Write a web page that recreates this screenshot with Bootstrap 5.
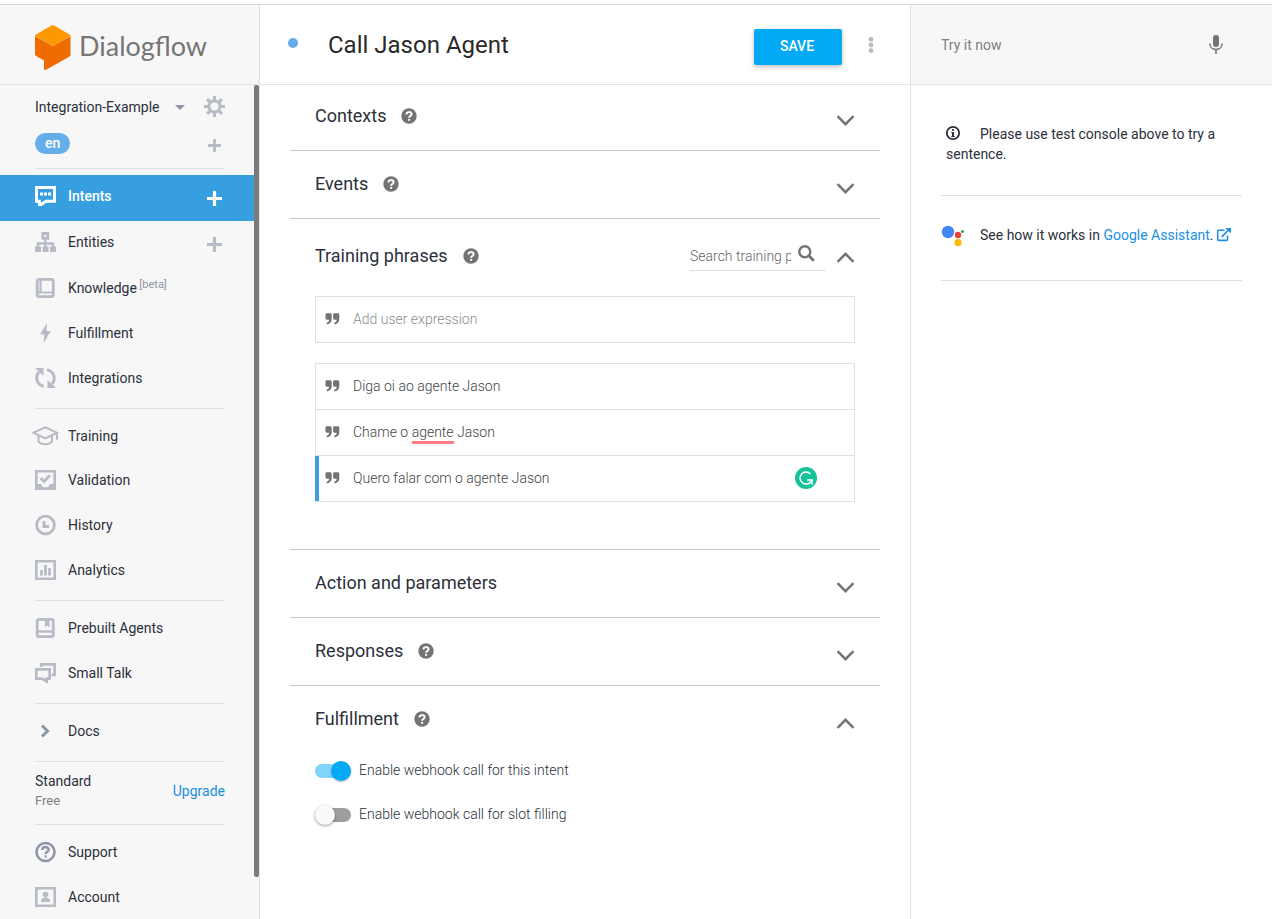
<!DOCTYPE html>
<html lang="en">
<head>
<meta charset="utf-8">
<meta name="viewport" content="width=device-width, initial-scale=1">
<title>Dialogflow - Call Jason Agent</title>
<link href="https://cdn.jsdelivr.net/npm/bootstrap@5.3.0/dist/css/bootstrap.min.css" rel="stylesheet">
<style>
  :root { --ink: #2b303b; --soft: #737373; --icon: #b7bbc6; --rule: #e0e0e0; --blue: #379fe0; --sky: #03a9f4; --pale: #f7f7f7; }
  body { font-family: Roboto, "Liberation Sans", sans-serif; font-size: 14px; line-height: 20px; color: var(--ink); background: #fff; }
  svg { display: block; flex: none; overflow: visible; }
  .app-shell { border-top: 1px solid #d8dadf; margin-top: 4px; height: calc(100vh - 4px); }
  .pane-head { height: 80px; border-bottom: 1px solid #e3e3e3; flex: none; }
  .side-pane { width: 260px; background: var(--pale); border-right: 1px solid #e3e3e3; flex: none; }
  .console-pane { width: 362px; border-left: 1px solid #e3e3e3; flex: none; }
  .console-pane .pane-head { background: var(--pale); }

  .brand-name { font-family: Lato, Roboto, sans-serif; font-size: 27px; line-height: 36px; color: #757575; padding-bottom: 4px; }
  .brand-link { padding: 7px 0 0 35px; gap: 8px; }
  .scroll-thumb { top: 0; right: 0; width: 5px; height: 95%; background: #7b7b7b; border-radius: 2px; }
  .agent-box { height: 83px; padding: 11px 34px 0 35px; }
  .agent-pick { appearance: none; border: 0; background: none; color: var(--ink); padding: 0; width: 140px; font-size: 14px; line-height: 20px; }
  .lang-pill { background: #66aee9; color: #fff; font-size: 14px; font-weight: 500; line-height: 20px; padding: 0 10px; height: 21px; }
  .bare-btn { border: 0; background: none; padding: 0; color: var(--icon); }
  .side-rule { height: 1px; background: var(--rule); margin: 6px 35px; }
  .side-rule.first { margin-top: 0; }
  .side-item { height: 45px; padding: 0 37px 3px 35px; }
  .side-item.tall { height: 46px; padding-bottom: 4px; }
  .side-item.short { height: 44px; }
  .side-item a { color: var(--ink); text-decoration: none; gap: 12px; }
  .side-item svg { color: var(--icon); }
  .side-item .bare-btn { padding-top: 5px; }
  .side-item.active { background: var(--blue); }
  .side-item.active a { color: #fff; font-weight: 500; }
  .side-item.active svg { color: #fff; }
  .side-item sup { font-size: 11px; color: #8f95a3; top: -5px; margin-left: -1px; vertical-align: baseline; }
  .plan-box { height: 50px; padding: 0 34px 4px 35px; }
  .plan-kind { font-size: 13px; color: #808080; }
  .link-blue { color: #1a8fe3; text-decoration: none; }

  .intent-head { padding: 0 34px 0 28px; }
  .intent-title { border: 0; outline: 0; padding: 0; font-size: 24px; line-height: 32px; color: #2a2a2a; min-width: 0; margin-left: 30px; }
  .status-dot { width: 10px; height: 10px; border-radius: 50%; background: #66aee9; flex: none; margin-bottom: 4px; }
  .save-btn { width: 88px; height: 36px; background: var(--sky); color: #fff; font-size: 14px; font-weight: 500; border-radius: 2px; border: 0; padding: 0 2px 2px 0; box-shadow: 0 2px 5px rgba(0,0,0,.26); margin-top: 5px; }
  .save-btn:hover { background: #0398dc; color: #fff; }
  .intent-body { padding: 0 30px; }
  .fold { border-bottom: 1px solid #cac6c8; padding: 0 25px; }
  .fold:last-child { border-bottom: 0; }
  .fold-head { height: 67px; padding-top: 21px; }
  .fold:first-child .fold-head { height: 65px; padding-top: 19px; }
  .fold:last-child .fold-head { height: 62px; }
  .fold-head.roomy { height: 77px; padding-top: 25px; }
  .fold-head h2 { font-size: 18px; line-height: 24px; font-weight: 400; margin: 0 15px 0 0; }
  .fold-head .help { margin-top: 4px; }
  .fold-toggle { margin-top: 11px; color: #737373; }
  .roomy .fold-toggle { margin-top: 8px; }
  .search-line { width: 136px; height: 27px; border-bottom: 1px solid #dcdcdc; margin-right: 10px; }
  .search-line input { width: 101px; border: 0; outline: 0; padding: 2px 0 3px; font-weight: 300; color: #555; line-height: 20px; }
  .search-line input::placeholder { color: #666; opacity: 1; }
  .search-line svg { margin: 1px 0 0 7px; }
  .phrase-box { border: 1px solid var(--rule); }
  .phrase-row { height: 46px; padding: 0 37px 1px 9px; gap: 13px; font-weight: 300; color: #444; }
  .phrase-row.entry { height: 45px; padding-bottom: 2px; }
  .phrase-row:first-child { height: 45px; }
  .phrase-row.entry input { border: 0; outline: 0; padding: 0; font-weight: 300; }
  .phrase-row.entry input::placeholder { color: #8c8c8c; opacity: 1; }
  .phrase-row + .phrase-row { border-top: 1px solid var(--rule); }
  .phrase-row.current { box-shadow: inset 4px 0 0 var(--blue); margin-left: -1px; padding-left: 10px; }
  .phrase-list { margin: 20px 0 47px; }
  .misspelt { border-bottom: 3px solid #ff7b82; border-radius: 1px; display: inline-block; line-height: 17px; margin-bottom: -3px; }
  .hook-switch { display: flex; align-items: center; height: 44px; gap: 8px; font-weight: 300; margin: 0; }
  .hook-switch input { appearance: none; width: 36px; height: 14px; border-radius: 7px; background: #9e9e9e; margin: 2px 0 0; position: relative; }
  .hook-switch input::after { content: ""; position: absolute; top: -3px; left: 0; width: 20px; height: 20px; border-radius: 50%; background: #fafafa; box-shadow: 0 1px 3px rgba(0,0,0,.4); }
  .hook-switch input:checked { background: #81d4fa; }
  .hook-switch input:checked::after { left: 16px; background: var(--sky); box-shadow: 0 1px 2px rgba(0,0,0,.25); }

  .console-head { padding: 0 49px 0 30px; }
  .console-head input { border: 0; outline: 0; padding: 0; background: none; }
  .console-head input::placeholder { color: #808080; opacity: 1; }
  .console-body { padding: 0 30px; }
  .console-tip { padding: 39px 5px 31px; border-bottom: 1px solid var(--rule); }
  .console-tip svg { display: inline-block; margin-right: 20px; vertical-align: -1px; }
  .console-more { height: 85px; border-bottom: 1px solid var(--rule); padding-bottom: 6px; gap: 15px; }
  .console-more .out-icon { display: inline-block; vertical-align: -1px; }
</style>
</head>
<body>
<svg width="0" height="0" class="position-absolute" aria-hidden="true">
  <symbol id="i-plus" viewBox="0 0 14 14"><path d="M7 0v14M0 7h14" stroke="currentColor" stroke-width="3"/></symbol>
  <symbol id="i-help" viewBox="0 0 16 16"><circle cx="8" cy="8" r="7.700" fill="#737373"/><path d="M5.500 6.400C5.500 3.400 10.600 3.400 10.600 6.200c0 1.800-2.500 1.900-2.500 3.600" fill="none" stroke="#fff" stroke-width="2"/><path d="M7.100 10.900h2v1.900h-2z" fill="#fff"/></symbol>
  <symbol id="i-down" viewBox="0 0 18 11"><path d="M1 1.200l8 8 8-8" fill="none" stroke="currentColor" stroke-width="2.400"/></symbol>
  <symbol id="i-up" viewBox="0 0 18 11"><path d="M1 9.800l8-8 8 8" fill="none" stroke="currentColor" stroke-width="2.400"/></symbol>
  <symbol id="i-quote" viewBox="0 0 14 12"><path fill="#737373" d="M1.300.3h3.400c.9 0 1.500.6 1.500 1.500V6c0 3-1.800 5.200-5 5.300V9.500c1.600-.2 2.300-1.200 2.400-2.800H1.300C.6 6.700 0 6.100 0 5.300V1.700C0 .9.600.3 1.300.3z"/><path fill="#737373" transform="translate(7.600 0)" d="M1.300.3h3.400c.9 0 1.500.6 1.500 1.500V6c0 3-1.800 5.200-5 5.300V9.500c1.600-.2 2.300-1.200 2.400-2.800H1.300C.6 6.700 0 6.100 0 5.300V1.700C0 .9.600.3 1.300.3z"/></symbol>
</svg>

<div class="app-shell d-flex overflow-hidden">
  <aside class="side-pane d-flex flex-column">
    <div class="pane-head">
      <a class="brand-link d-flex align-items-center text-decoration-none h-100" href="#">
        <svg width="36" height="46" viewBox="0 0 36 46"><path fill="#ef6c00" d="M0 11l17.700 10L35.500 11v18.500c0 1-.4 1.700-1.300 2.200L11.500 44.600c-1.400.8-2.500.3-2.500-1.200v-8L1.500 31.200C.5 30.600 0 30 0 29z"/><path fill="#ff9800" d="M.5 9.700L16.400.6c.9-.5 1.800-.5 2.700 0l15.900 9.100c.7.400.7 1 0 1.400L19.100 20.200c-.9.5-1.800.5-2.700 0L.5 11.100c-.7-.4-.7-1 0-1.400z"/></svg>
        <span class="brand-name">Dialogflow</span>
      </a>
    </div>
    <div class="position-relative flex-grow-1 overflow-hidden">
      <div class="agent-box">
        <div class="d-flex align-items-center">
          <select class="agent-pick" aria-label="Agent"><option>Integration-Example</option></select>
          <svg width="10" height="6" viewBox="0 0 10 6"><path d="M0 1h10L5 6z" fill="#8f95a8"/></svg>
          <button class="bare-btn ms-auto" aria-label="Agent settings"><svg width="21" height="21" viewBox="0 0 21 21"><g stroke="currentColor" stroke-width="3.200"><path d="M10.500 0v4M10.500 17v4M0 10.500h4M17 10.500h4M3.100 3.100l3 3M14.900 14.900l3 3M3.100 17.900l3-3M14.900 6.100l3-3"/></g><circle cx="10.500" cy="10.500" r="5.600" fill="none" stroke="currentColor" stroke-width="3"/></svg></button>
        </div>
        <div class="d-flex align-items-center mt-3">
          <span class="lang-pill rounded-pill">en</span>
          <button class="bare-btn ms-auto me-1 pt-1" aria-label="Add language"><svg width="13" height="13"><use href="#i-plus"/></svg></button>
        </div>
      </div>
      <div class="side-rule first"></div>
      <nav>
        <div class="side-item tall active d-flex align-items-center"><a href="#" class="d-flex align-items-center"><svg width="21" height="20" viewBox="0 0 21 20"><path d="M1.500 1.500h18v13.700H11L6 18.600H4.500v-3.400h-3z" fill="none" stroke="currentColor" stroke-width="3"/><path d="M5 6.500h3v3H5zM9 6.500h3v3H9zM13 6.500h3v3h-3z" fill="currentColor"/></svg>Intents</a><button class="bare-btn ms-auto" aria-label="Create intent"><svg width="15" height="15"><use href="#i-plus"/></svg></button></div>
        <div class="side-item tall d-flex align-items-center"><a href="#" class="d-flex align-items-center"><svg width="21" height="20" viewBox="0 0 21 20"><path d="M7.800 1.500h5v4.800h-5z" fill="none" stroke="currentColor" stroke-width="2.800"/><path d="M10.300 7v9M3 16v-4.500h15V16" fill="none" stroke="currentColor" stroke-width="2.400"/><path d="M0 14.500h6V20H0zM7.500 14.500h6V20h-6zM15 14.500h6V20h-6z" fill="currentColor"/></svg>Entities</a><button class="bare-btn ms-auto" aria-label="Create entity"><svg width="15" height="15"><use href="#i-plus"/></svg></button></div>
        <div class="side-item d-flex align-items-center"><a href="#" class="d-flex align-items-center"><svg width="21" height="20" viewBox="0 0 21 20"><path d="M4 1.400h12.500a1.800 1.800 0 0 1 1.800 1.800v13.600a1.800 1.800 0 0 1-1.800 1.800H4a1.800 1.800 0 0 1-1.800-1.800V3.200A1.800 1.800 0 0 1 4 1.400z" fill="none" stroke="currentColor" stroke-width="2.800"/><path d="M5.500 1v13M2 14.500h17" stroke="currentColor" stroke-width="2.200"/></svg><span>Knowledge <sup>[beta]</sup></span></a></div>
        <div class="side-item d-flex align-items-center"><a href="#" class="d-flex align-items-center"><svg width="21" height="20" viewBox="0 0 21 20"><path d="M12 0L5 11.500h4.200L8.700 20l7-12H11.500z" fill="currentColor"/></svg>Fulfillment</a></div>
        <div class="side-item d-flex align-items-center"><a href="#" class="d-flex align-items-center"><svg width="21" height="20" viewBox="0 0 21 20"><path d="M4 4C-.3 9 1.500 16.500 8.800 18.400M17 16c4.300-5 2.300-12.500-5-14.400" fill="none" stroke="currentColor" stroke-width="3"/><path d="M0 0h8.500v8zM21 20h-8.500v-8z" fill="currentColor"/></svg>Integrations</a></div>
        <div class="side-rule"></div>
        <div class="side-item short d-flex align-items-center"><a href="#" class="d-flex align-items-center"><svg width="21" height="20" viewBox="0 0 21 20"><path d="M-1.500 6.700L10.300 1.300 22 6.700 10.300 12.300zM3.500 9v6.700c3 3.400 10.500 3.400 13.500 0V9M22 6.700v7" fill="none" stroke="currentColor" stroke-width="2"/></svg>Training</a></div>
        <div class="side-item d-flex align-items-center"><a href="#" class="d-flex align-items-center"><svg width="21" height="20" viewBox="0 0 21 20"><path d="M1.300 1.300h18.400v17.400H1.300z" fill="none" stroke="currentColor" stroke-width="2.600"/><path d="M1 14h5l2 3.500h5L15 14h5v5H1z" fill="currentColor"/><path d="M5.800 8l3.200 3.400 6-6.200" fill="none" stroke="currentColor" stroke-width="2.800"/></svg>Validation</a></div>
        <div class="side-item d-flex align-items-center"><a href="#" class="d-flex align-items-center"><svg width="21" height="20" viewBox="0 0 21 20"><circle cx="10.500" cy="10" r="8.900" fill="none" stroke="currentColor" stroke-width="2.800"/><path d="M9 6v5.500h5" fill="none" stroke="currentColor" stroke-width="3"/></svg>History</a></div>
        <div class="side-item d-flex align-items-center"><a href="#" class="d-flex align-items-center"><svg width="21" height="20" viewBox="0 0 21 20"><path d="M1.300 1.300h18.400v17.400H1.300z" fill="none" stroke="currentColor" stroke-width="2.600"/><path d="M6.500 15.500V10M10.500 15.500V5M14.500 15.500V8" stroke="currentColor" stroke-width="2.800"/></svg>Analytics</a></div>
        <div class="side-rule"></div>
        <div class="side-item d-flex align-items-center"><a href="#" class="d-flex align-items-center"><svg width="21" height="20" viewBox="0 0 21 20"><path d="M4 1.400h12.500a1.800 1.800 0 0 1 1.800 1.800v13.600a1.800 1.800 0 0 1-1.800 1.800H4a1.800 1.800 0 0 1-1.800-1.800V3.200A1.800 1.800 0 0 1 4 1.400z" fill="none" stroke="currentColor" stroke-width="2.800"/><path d="M2 13.500h17" stroke="currentColor" stroke-width="2.400"/><path d="M10 1h4.500v8.500l-2.200-2-2.300 2z" fill="currentColor"/></svg>Prebuilt Agents</a></div>
        <div class="side-item d-flex align-items-center"><a href="#" class="d-flex align-items-center"><svg width="21" height="20" viewBox="0 0 21 20"><path d="M6.200 4V1.300h13.500v10.500h-3" fill="none" stroke="currentColor" stroke-width="2.700"/><path d="M1.300 6.300h13.400v9.400h-3v2.700L7 15.700H1.300z" fill="none" stroke="currentColor" stroke-width="2.700"/></svg>Small Talk</a></div>
        <div class="side-rule"></div>
        <div class="side-item d-flex align-items-center"><a href="#" class="d-flex align-items-center"><svg width="21" height="20" viewBox="0 0 21 20"><path d="M7 4.500l5.500 5.500L7 15.500" fill="none" stroke="#8f95a8" stroke-width="3"/></svg>Docs</a></div>
        <div class="side-rule"></div>
        <div class="plan-box d-flex justify-content-between align-items-center">
          <div><div>Standard</div><div class="plan-kind">Free</div></div>
          <a class="link-blue" href="#">Upgrade</a>
        </div>
        <div class="side-rule"></div>
        <div class="side-item d-flex align-items-center"><a href="#" class="d-flex align-items-center"><svg width="21" height="20" viewBox="0 0 21 20"><g fill="none" stroke="#8f95a8"><circle cx="10.500" cy="10" r="9" stroke-width="2.600"/><path d="M7.300 8c0-3.900 6.400-3.900 6.400-.3 0 2-3 2.100-3 4.300" stroke-width="2.400"/></g><path d="M9.500 13.300h2.300v2.300H9.500z" fill="#8f95a8"/></svg>Support</a></div>
        <div class="side-item d-flex align-items-center"><a href="#" class="d-flex align-items-center"><svg width="21" height="20" viewBox="0 0 21 20"><path d="M1.300 1.300h18.400v17.400H1.300z" fill="none" stroke="currentColor" stroke-width="2.600"/><circle cx="10.500" cy="7.500" r="2.800" fill="currentColor"/><path d="M6 15v-2.500l3-2h3l3 2V15z" fill="currentColor"/></svg>Account</a></div>
      </nav>
      <div class="scroll-thumb position-absolute"></div>
    </div>
  </aside>

  <main class="flex-grow-1 d-flex flex-column overflow-hidden">
    <div class="pane-head intent-head d-flex align-items-center">
      <span class="status-dot"></span>
      <input class="intent-title flex-grow-1" type="text" value="Call Jason Agent" aria-label="Intent name">
      <button class="btn save-btn">SAVE</button>
      <button class="bare-btn ms-4" aria-label="More options"><svg width="10" height="16" viewBox="0 0 10 16"><g fill="currentColor"><circle cx="5" cy="2.300" r="2.400"/><circle cx="5" cy="8" r="2.400"/><circle cx="5" cy="13.700" r="2.400"/></g></svg></button>
    </div>
    <div class="intent-body">
      <section class="fold"><div class="fold-head d-flex align-items-start"><h2>Contexts</h2><svg class="help" width="16" height="16"><use href="#i-help"/></svg><button class="bare-btn fold-toggle ms-auto" aria-label="Expand contexts"><svg width="19" height="11"><use href="#i-down"/></svg></button></div></section>
      <section class="fold"><div class="fold-head d-flex align-items-start"><h2>Events</h2><svg class="help" width="16" height="16"><use href="#i-help"/></svg><button class="bare-btn fold-toggle ms-auto" aria-label="Expand events"><svg width="19" height="11"><use href="#i-down"/></svg></button></div></section>
      <section class="fold">
        <div class="fold-head roomy d-flex align-items-start">
          <h2>Training phrases</h2><svg class="help" width="16" height="16"><use href="#i-help"/></svg>
          <div class="search-line ms-auto d-flex align-items-start">
            <input type="text" placeholder="Search training phrases" aria-label="Search training phrases">
            <svg width="17" height="17" viewBox="0 0 17 17"><circle cx="6.800" cy="6.800" r="5.500" fill="none" stroke="#737373" stroke-width="2.400"/><path d="M10.800 10.800l5 5" stroke="#737373" stroke-width="2.800"/></svg>
          </div>
          <button class="bare-btn fold-toggle" aria-label="Collapse training phrases"><svg width="19" height="11"><use href="#i-up"/></svg></button>
        </div>
        <div class="phrase-box"><div class="phrase-row entry d-flex align-items-center"><svg width="15" height="12"><use href="#i-quote"/></svg><input class="flex-grow-1" type="text" placeholder="Add user expression" aria-label="Add user expression"></div></div>
        <div class="phrase-box phrase-list">
          <div class="phrase-row d-flex align-items-center"><svg width="15" height="12"><use href="#i-quote"/></svg><span>Diga oi ao agente Jason</span></div>
          <div class="phrase-row d-flex align-items-center"><svg width="15" height="12"><use href="#i-quote"/></svg><span>Chame o <span class="misspelt">agente</span> Jason</span></div>
          <div class="phrase-row current d-flex align-items-center"><svg width="15" height="12"><use href="#i-quote"/></svg><span class="flex-grow-1">Quero falar com o agente Jason</span>
            <svg width="22" height="22" viewBox="0 0 22 22"><circle cx="11" cy="11" r="11" fill="#15c39a"/><path d="M15.500 7A6 6 0 1 0 16.300 14" fill="none" stroke="#fff" stroke-width="1.600"/><path d="M12 13h5v4.500" fill="none" stroke="#fff" stroke-width="1.600"/></svg>
          </div>
        </div>
      </section>
      <section class="fold"><div class="fold-head d-flex align-items-start"><h2>Action and parameters</h2><button class="bare-btn fold-toggle ms-auto" aria-label="Expand action and parameters"><svg width="19" height="11"><use href="#i-down"/></svg></button></div></section>
      <section class="fold"><div class="fold-head d-flex align-items-start"><h2>Responses</h2><svg class="help" width="16" height="16"><use href="#i-help"/></svg><button class="bare-btn fold-toggle ms-auto" aria-label="Expand responses"><svg width="19" height="11"><use href="#i-down"/></svg></button></div></section>
      <section class="fold">
        <div class="fold-head d-flex align-items-start border-0"><h2>Fulfillment</h2><svg class="help" width="16" height="16"><use href="#i-help"/></svg><button class="bare-btn fold-toggle ms-auto" aria-label="Collapse fulfillment"><svg width="19" height="11"><use href="#i-up"/></svg></button></div>
        <label class="hook-switch"><input type="checkbox" role="switch" checked>Enable webhook call for this intent</label>
        <label class="hook-switch"><input type="checkbox" role="switch">Enable webhook call for slot filling</label>
      </section>
    </div>
  </main>

  <aside class="console-pane">
    <div class="pane-head console-head d-flex align-items-center">
      <input class="flex-grow-1" type="text" placeholder="Try it now" aria-label="Try it now">
      <button class="bare-btn" aria-label="Speak"><svg width="14" height="19" viewBox="0 0 14 19"><rect x="4" y="0" width="6" height="12" rx="3" fill="#737373"/><path d="M.8 8.500C.8 16.500 13.200 16.500 13.200 8.500M7 14.500V19" fill="none" stroke="#737373" stroke-width="1.600"/></svg></button>
    </div>
    <div class="console-body">
      <p class="console-tip mb-0"><svg width="14" height="14" viewBox="0 0 14 14"><circle cx="7" cy="7" r="6.200" fill="none" stroke="currentColor" stroke-width="1.800"/><path d="M6 3h2v1.800H6zM5.300 6H8v4h.8v1H5.300v-1H6V7h-.7z" fill="currentColor"/></svg>Please use test console above to try a sentence.</p>
      <div class="console-more d-flex align-items-center">
        <svg width="24" height="22" viewBox="0 0 24 22"><circle cx="7" cy="8" r="6.200" fill="#4285f4"/><circle cx="17" cy="11" r="3.200" fill="#ea4335"/><circle cx="17" cy="18.700" r="3.600" fill="#fbbc05"/><circle cx="21.500" cy="7.500" r="1.600" fill="#34a853"/></svg>
        <span>See how it works in <a class="link-blue" href="#">Google Assistant</a>. <a href="#" class="link-blue" aria-label="Open Google Assistant"><svg class="out-icon" width="14" height="13" viewBox="0 0 15 14"><path d="M8 2.500H1.700a1 1 0 0 0-1 1v8.800a1 1 0 0 0 1 1h8.600a1 1 0 0 0 1-1V8M5 9.500l7-7" fill="none" stroke="currentColor" stroke-width="1.700"/><path d="M9 0H15v6z" fill="currentColor"/></svg></a></span>
      </div>
    </div>
  </aside>
</div>
<script src="https://cdn.jsdelivr.net/npm/bootstrap@5.3.0/dist/js/bootstrap.bundle.min.js"></script>
</body>
</html>
